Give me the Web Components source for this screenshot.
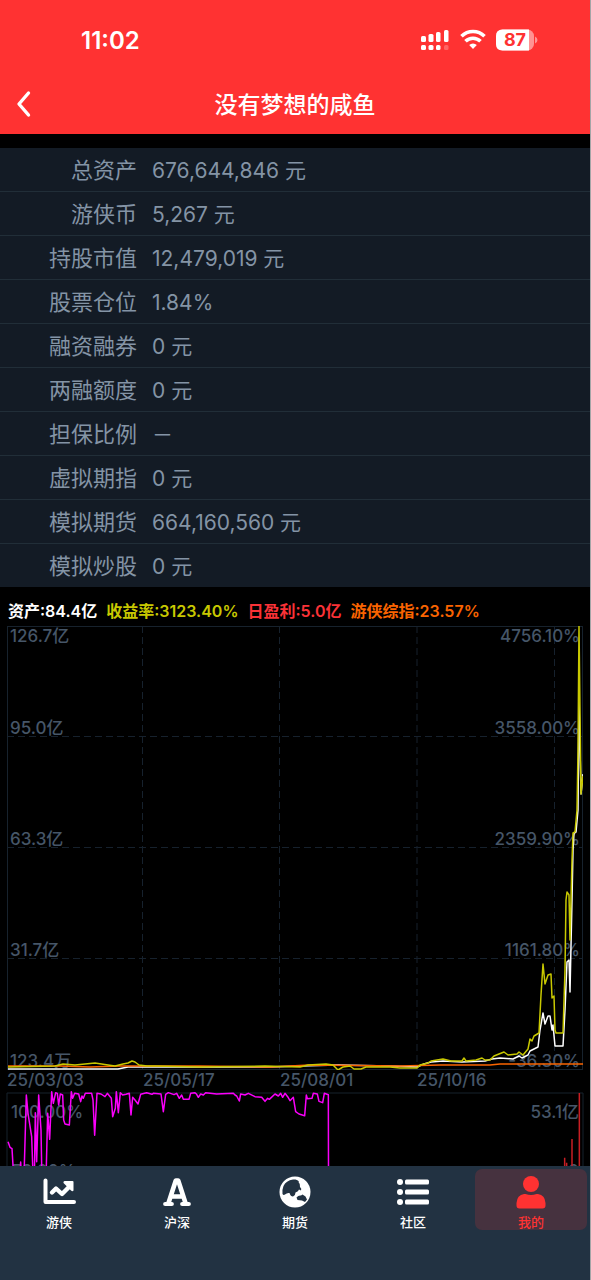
<!DOCTYPE html>
<html lang="zh-CN">
<head>
<meta charset="utf-8">
<meta name="viewport" content="width=device-width, initial-scale=1">
<title>没有梦想的咸鱼</title>
<style>
html,body{margin:0;height:100%;background:#000}
body{font-family:Inter,"Noto Sans CJK SC",sans-serif;color:#8494a5}
</style>
</head>
<body>
<game-app>
  <status-bar slot="top" time="11:02" battery="87"></status-bar>
  <nav-header slot="top">没有梦想的咸鱼</nav-header>
  <asset-table></asset-table>
  <chart-legend></chart-legend>
  <profit-chart></profit-chart>
  <position-chart></position-chart>
  <tab-bar slot="bottom">
    <tab-item label="游侠"><svg viewBox="0 0 34 32" width="34" height="32"><path d="M3.500 4.500v21.500H32" fill="none" stroke="#fff" stroke-width="4" stroke-linecap="round" stroke-linejoin="round"/><path d="M10 16.500l4-4 6 5.500L27 11" fill="none" stroke="#fff" stroke-width="4.400" stroke-linejoin="round" stroke-linecap="round"/><path d="M22.500 5h8q1 0 1 1v8.500q-1 1.500-2.500 0l-7.500-7.500q-.5-1.500 1-2z" fill="#fff"/></svg></tab-item>
    <tab-item label="沪深"><svg viewBox="0 0 32 32" width="32" height="32"><g fill="none" stroke="#fff" stroke-linecap="round" stroke-linejoin="round"><path stroke-width="4.600" d="M7.500 27L14.800 4.500h2.400L24.500 27M10.500 20.500h11"/><path stroke-width="4.200" d="M4.200 28h6.600M21.200 28h6.600"/></g></svg></tab-item>
    <tab-item label="期货"><svg viewBox="0 0 32 32" width="32" height="32"><circle cx="16" cy="16" r="15.500" fill="#fff"/><path fill="#223242" d="M14 3.500Q7 4.500 4.500 10 3 13.500 3.500 18q1 1.500 2.500.5 2-2 4.500-1.500 1 3.500 3.500 3.500 2.500-1 2.500-4 3-1 3.500-3l2 1q1-2-1-3.500.5-3-1.500-5 1.500-1-3-2.500zM17.500 21.500q2-2.500 4.500-2l1.500-1 3 2 1.500 3-2 2.500-3-1.500-4.500-.5z"/></svg></tab-item>
    <tab-item label="社区"><svg viewBox="0 0 34 32" width="34" height="32"><g fill="#fff"><circle cx="4" cy="6" r="3"/><circle cx="4" cy="16" r="3"/><circle cx="4" cy="26" r="3"/><rect x="9" y="3.500" width="24" height="5" rx="1.500"/><rect x="9" y="13.500" width="24" height="5" rx="1.500"/><rect x="9" y="23.500" width="24" height="5" rx="1.500"/></g></svg></tab-item>
    <tab-item label="我的" active><svg viewBox="0 0 32 32" width="32" height="32"><g fill="#ff3232"><circle cx="16" cy="8" r="8"/><path d="M9 18h1.500q5.500 2 11 0H23q7 1 7.500 9v2.500q0 3-3 3h-23q-3 0-3-3V27Q2 19 9 18z"/></g></svg></tab-item>
  </tab-bar>
</game-app>

<script>
const define = (name, render) => customElements.define(name, class extends HTMLElement {
  constructor() {
    super();
    this.attachShadow({ mode: 'open' });
  }
  connectedCallback() {
    this.shadowRoot.innerHTML = render(this);
  }
});

define('game-app', () => `
<style>
:host{display:flex;flex-direction:column;height:100vh;box-sizing:border-box;border-right:1px solid #a3a5a7;background:#000}
main{flex:1;min-height:0;overflow:hidden;padding-top:14px}
</style>
<header><slot name="top"></slot></header>
<main><slot></slot></main>
<footer><slot name="bottom"></slot></footer>`);

define('status-bar', el => `
<style>
:host{display:flex;justify-content:space-between;align-items:center;height:80px;padding:0 52px 0 81px;background:#ff3232;color:#fff;box-sizing:border-box}
time{font-size:24px;font-weight:600;line-height:32px;padding-top:2px}
div{display:flex;align-items:center;gap:10px}
.battery{display:grid;grid-template-columns:38px 4px;align-items:center}
.battery b{grid-area:1/1;text-align:center;color:#ff3232;font-size:18px;line-height:22px;font-weight:700}
.battery svg{grid-area:1/1/2/3}
</style>
<time>${el.getAttribute('time')}</time>
<div>
<svg width="30" height="22" viewBox="0 0 30 22" fill="#fff"><rect x="1" y="7" width="5" height="6" rx="1.500"/><rect x="8.500" y="5" width="5" height="8" rx="1.500"/><rect x="16" y="3" width="4.500" height="10" rx="1.500"/><rect x="24" y="1" width="4.500" height="12" rx="1.500"/><rect x="1" y="16" width="5" height="5" rx="1.500"/><rect x="8.500" y="16" width="5" height="5" rx="1.500"/><rect x="16" y="16" width="4.500" height="5" rx="1.500"/><rect x="24" y="16" width="4.500" height="5" rx="1.500" opacity=".25"/></svg>
<svg width="26" height="22" viewBox="0 0 26 22" fill="none" stroke="#fff" stroke-width="3.600"><path d="M1.500 7.300a16.300 16.300 0 0 1 23 0M5.500 12.300a10.600 10.600 0 0 1 15 0"/><path d="M13 20l-3.800-3.900a5.400 5.400 0 0 1 7.600 0z" fill="#fff" stroke="none"/></svg>
<span class="battery"><svg width="42" height="22" viewBox="0 0 42 22"><rect x="0" y=".5" width="38" height="21" rx="6.500" fill="#ff9393"/><path d="M6.500.5H33v21H6.500Q0 21.500 0 15V7Q0 .5 6.500.5z" fill="#fff"/><path d="M39 7.500q2.500 1 2.500 3.500T39 14.500z" fill="#ff9393"/></svg><b>${el.getAttribute('battery')}</b></span>
</div>`);

define('nav-header', () => `
<style>
:host{display:grid;grid-template-columns:52px 1fr 52px;align-items:center;height:54px;background:#ff3232;color:#fff;box-sizing:border-box}
button{border:0;background:none;padding:0 0 6px 16px;height:44px;display:flex;align-items:center}
h1{margin:0 0 4px;font-size:23px;line-height:34px;font-weight:500;text-align:center}
</style>
<button aria-label="返回"><svg width="18" height="28" viewBox="0 0 18 28"><path d="M12.500 3L3 14l9.500 11" fill="none" stroke="#fff" stroke-width="3.400" stroke-linecap="round" stroke-linejoin="round"/></svg></button>
<h1><slot></slot></h1>`);

const assets = [['总资产','676,644,846 元'],['游侠币','5,267 元'],['持股市值','12,479,019 元'],['股票仓位','1.84%'],['融资融券','0 元'],['两融额度','0 元'],['担保比例','－'],['虚拟期指','0 元'],['模拟期货','664,160,560 元'],['模拟炒股','0 元']];
define('asset-table', () => `
<style>
:host{display:block;background:#131b25;line-height:41px}
table{width:100%;border-collapse:collapse}
tr+tr{border-top:1px solid #212e38}
th,td{padding:2px 0 0;font-weight:400}
th{width:137px;text-align:right;font-size:22px}
td{padding-left:15px;font-size:21px}
</style>
<table>${assets.map(([k, v]) => `<tr><th scope="row">${k}</th><td>${v}</td></tr>`).join('')}</table>`);

define('chart-legend', () => `
<style>
:host{display:flex;gap:9px;padding:12px 8px 3px;font-size:16px;line-height:24px;font-weight:600;white-space:nowrap;color:#fff}
.rate{color:#c8c800}.day{color:#fa3237}.index{color:#fa6400}
</style>
<span>资产:84.4亿</span><span class="rate">收益率:3123.40%</span><span class="day">日盈利:5.0亿</span><span class="index">游侠综指:23.57%</span>`);

const chartStyle = `
path,line,polyline{vector-effect:non-scaling-stroke;fill:none}
.frame{stroke:#17222d;stroke-width:2}
.grid{stroke:#16212d;stroke-width:1;stroke-dasharray:7 4}
polyline{stroke-width:1.5;stroke-linejoin:round}
.labels{color:#465668;font-size:17px;line-height:20px;font-weight:500}`;

define('profit-chart', () => `
<style>
:host{display:block;padding:0 7px}
.plot{display:grid}
.plot>*{grid-area:1/1}
svg{width:100%;height:444px;display:block}
.labels{display:grid;grid-template-rows:20px 92px repeat(3,111px);padding:0 3px;height:444px;box-sizing:border-box;align-items:end}
.labels div{display:flex;justify-content:space-between}
.plot+.dates{display:grid;grid-template-columns:136fr 137fr 137fr 166fr;grid-template-rows:auto;padding:0;height:23px;align-items:start}
${chartStyle}
</style>
<div class="plot">
<svg viewBox="7 626 576 444" preserveAspectRatio="none"><path class="grid" d="M7 736.500H583M7 847.500H583M7 958.500H583M142.500 626V1070M279.500 626V1070M417 626V1070M554.500 626V1070"/></svg>
<div class="labels"><div><span>126.7亿</span><span>4756.10%</span></div><div><span>95.0亿</span><span>3558.00%</span></div><div><span>63.3亿</span><span>2359.90%</span></div><div><span>31.7亿</span><span>1161.80%</span></div><div><span>123.4万</span><span>-36.30%</span></div></div>
<svg viewBox="7 626 576 444" preserveAspectRatio="none"><path class="frame" d="M7 626H583V1070H7z"/>
<polyline stroke="#fff" points="8,1069 118,1069 128,1067 153,1067 270,1067 300,1066 338,1065 390,1066 417,1067 424,1064 431,1062 443,1061 462,1062 485,1061 492,1059 500,1058 513,1059 519,1056 522,1058 528,1055 530,1051 538,1047 540,1030 543,1013 545,1024 548,1016 550,1016 552,1030 553,1025 555,1046 563,1046 565,1010 567,962 569,960 570,992 572,900 573,850 574,833 576,832 578,810 579,700 581,794 583,774"/>
<polyline stroke="#fa6400" points="8,1066 60,1066 90,1067 120,1066 200,1066 270,1067 310,1065 400,1066 440,1065 490,1065 500,1064 583,1064"/>
<polyline stroke="#c8c800" points="8,1067 55,1066 63,1064 75,1065 85,1064 95,1063 108,1065 115,1066 123,1064 128,1063 132,1061 135,1062 139,1065 147,1066 155,1066 200,1067 265,1066 300,1067 308,1065 326,1064 333,1065 338,1070 343,1067 350,1066 354,1069 361,1069 366,1067 390,1067 400,1068 417,1068 420,1065 428,1063 431,1061 443,1059 451,1061 462,1061 464,1058 466,1061 476,1060 482,1058 485,1060 490,1060 494,1056 504,1052 508,1055 517,1054 519,1052 523,1055 528,1049 530,1039 532,1041 534,1036 539,1033 541,995 543,964 545,984 548,975 551,974 552,998 554,996 555,1030 556,1033 563,1033 565,970 566,900 567,892 569,895 570,940 572,860 573,833 575,832 577,810 578,750 579,626 581,794 583,776"/></svg>
</div>
<div class="dates labels"><span>25/03/03</span><span>25/05/17</span><span>25/08/01</span><span>25/10/16</span></div>`);

define('position-chart', () => `
<style>
:host{display:grid;padding:0 7px}
:host>*{grid-area:1/1}
svg{width:100%;height:148px;display:block;overflow:visible}
.labels{padding:9px 4px;display:flex;flex-direction:column;gap:39px}
.labels div{display:flex;justify-content:space-between}
${chartStyle}
.frame{stroke-width:1}
</style>
<div class="labels"><div><span>100.00%</span><span>53.1亿</span></div><div><span>50.00%</span><span>0</span></div></div>
<svg viewBox="21 159 1728 444" preserveAspectRatio="none"><path class="frame" d="M21 159H1749V603H21z"/>
<path stroke="#c81e23" stroke-width="1.500" d="M1738 159V603M1716 297V603M1694 353V603M1700 368V603"/>
<polyline stroke="#fa00fa" points="24,305 30,322 36,326 39,376 41,420 58,420 62,366 65,420 73,376 79,165 84,220 95,290 98,376 100,420 103,420 106,218 110,365 116,165 123,270 125,376 127,420 138,420 143,220 149,298 155,155 160,190 167,158 172,160 176,195 181,162 188,165 191,240 195,252 208,255 214,155 218,175 224,160 236,162 242,185 246,168 250,175 256,160 275,160 279,180 284,286 291,160 303,162 315,170 322,160 334,175 338,230 346,205 349,155 355,218 361,158 368,165 378,163 388,160 393,225 398,172 405,180 414,192 422,163 440,158 456,163 460,160 483,162 490,215 497,163 505,158 522,164 530,160 538,175 545,165 550,178 567,178 572,160 585,158 590,163 595,172 602,162 610,165 617,158 650,162 700,160 705,165 710,168 718,183 722,162 735,165 745,160 765,170 785,172 795,184 803,175 808,178 825,162 835,168 842,160 848,172 855,160 863,170 870,182 880,172 887,215 897,222 914,227 919,165 922,176 936,175 940,160 952,162 957,184 968,188 973,160 985,164 986,603"/></svg>`);

define('tab-bar', () => `
<style>
:host{display:block;height:114px;background:#223242}
nav{display:grid;grid-template-columns:repeat(5,1fr)}
</style>
<nav><slot></slot></nav>`);

define('tab-item', el => `
<style>
:host{display:block;color:#fff;padding:3px}
a{display:flex;flex-direction:column;align-items:center;height:61px;padding-top:7px;box-sizing:border-box;border-radius:7px;gap:4px;color:inherit;text-decoration:none;font-size:13px;line-height:20px;font-weight:500}
:host([active]){color:#ff3232}
:host([active]) a{background:#46323f}
::slotted(svg){display:block;overflow:visible}
</style>
<a href="#"><slot></slot><span>${el.getAttribute('label')}</span></a>`);
</script>
</body>
</html>
